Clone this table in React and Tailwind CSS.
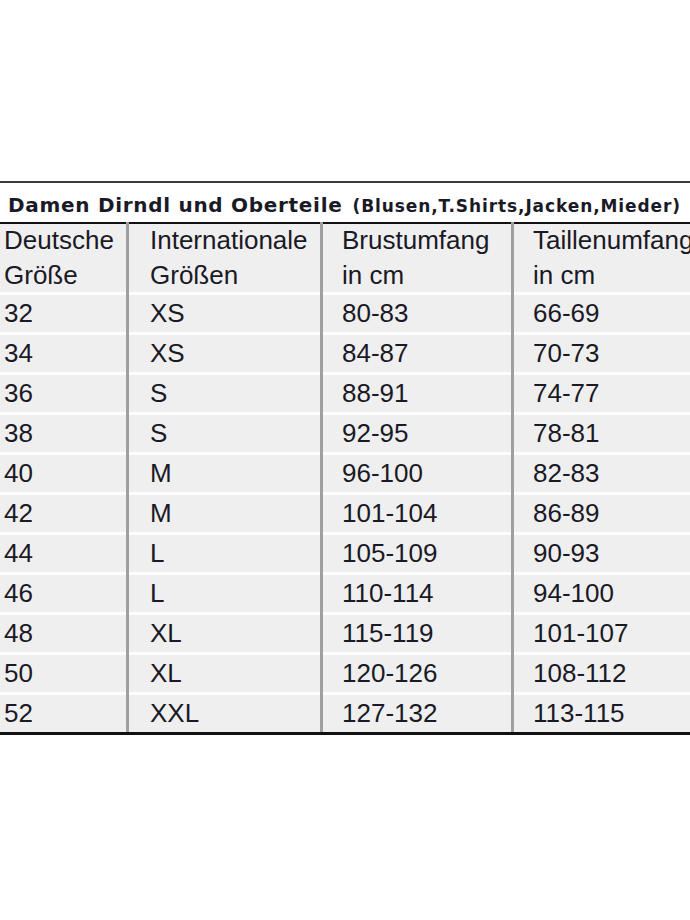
const rows = [
  ["32", "XS", "80-83", "66-69"],
  ["34", "XS", "84-87", "70-73"],
  ["36", "S", "88-91", "74-77"],
  ["38", "S", "92-95", "78-81"],
  ["40", "M", "96-100", "82-83"],
  ["42", "M", "101-104", "86-89"],
  ["44", "L", "105-109", "90-93"],
  ["46", "L", "110-114", "94-100"],
  ["48", "XL", "115-119", "101-107"],
  ["50", "XL", "120-126", "108-112"],
  ["52", "XXL", "127-132", "113-115"],
];

const header = [
  ["Deutsche", "Größe"],
  ["Internationale", "Größen"],
  ["Brustumfang", "in cm"],
  ["Taillenumfang", "in cm"],
];

const pads = ["pl-[4px]", "pl-[21px]", "pl-[19px]", "pl-[19px]"];

function Cell({ i, children, head }) {
  return (
    <div
      className={
        (i > 0 ? "border-l-[3px] border-[#9f9f9f] " : "") +
        (head ? "" : "pt-[3px] bg-white ") +
        "min-w-0"
      }
    >
      <div
        className={
          "bg-[#efefef] whitespace-nowrap overflow-visible " +
          pads[i] +
          (head
            ? " h-[70px] border-t-2 border-[#111] flex flex-col justify-center leading-[35px]"
            : " h-[37px] flex items-center")
        }
      >
        {children}
      </div>
    </div>
  );
}

export default function App() {
  return (
    <div
      className="w-[690px] h-[920px] bg-white overflow-hidden text-[#1a1a26]"
      style={{ fontFamily: '"Liberation Sans", Arial, sans-serif' }}
    >
      <div className="h-[181px]" />
      <div className="border-t-2 border-[#3a3a3a]">
        <div className="h-[39px] flex items-end pb-[7px] pl-[8px] whitespace-nowrap">
          <span
            className="font-bold text-[20px] leading-none tracking-[0.7px]"
            style={{ fontFamily: '"DejaVu Sans", sans-serif' }}
          >
            Damen Dirndl und Oberteile
          </span>
          <span
            className="font-bold text-[17px] leading-none ml-[10px] tracking-[0.9px]"
            style={{ fontFamily: '"DejaVu Sans", sans-serif' }}
          >
            (Blusen,T.Shirts,Jacken,Mieder)
          </span>
        </div>
        <div className="grid grid-cols-[126px_194px_191px_179px] text-[26px] overflow-hidden">
          {header.map((h, i) => (
            <Cell key={"h" + i} i={i} head>
              <div>{h[0]}</div>
              <div>{h[1]}</div>
            </Cell>
          ))}
          {rows.map((r, ri) =>
            r.map((v, i) => (
              <Cell key={ri + "-" + i} i={i}>
                {v}
              </Cell>
            ))
          )}
        </div>
        <div className="h-[3px] bg-[#111]" />
      </div>
    </div>
  );
}
